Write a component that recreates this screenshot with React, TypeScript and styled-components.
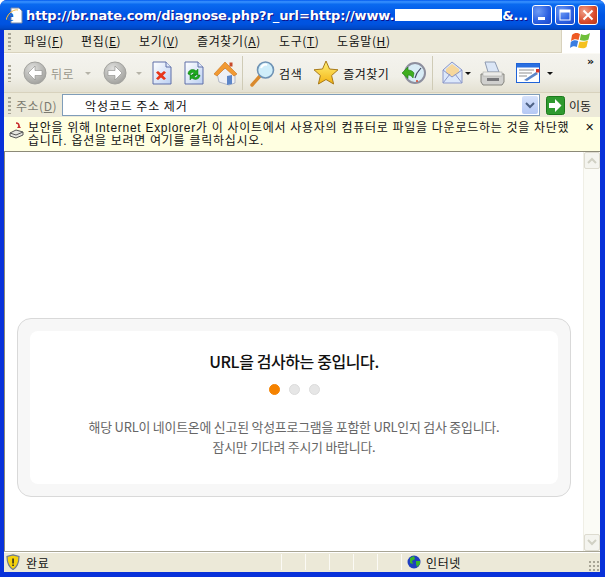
import React from "react";
import styled, { createGlobalStyle } from "styled-components";

const uiFont = `"Noto Sans CJK KR", "Noto Sans", sans-serif`;

const GlobalStyle = createGlobalStyle`
  html, body { margin: 0; padding: 0; background: #fff; }
  body { font-family: ${uiFont}; }
  * { box-sizing: border-box; }
`;

const Win = styled.div`
  width: 605px;
  height: 577px;
  display: flex;
  flex-direction: column;
  overflow: hidden;
  background: #0831d9;
  border-radius: 7px 7px 0 0;
`;

const TitleBar = styled.div`
  height: 30px;
  flex: none;
  display: flex;
  align-items: center;
  padding: 0 7px 0 6px;
  background: linear-gradient(180deg, #0058ee 0%, #3a93ff 6%, #0a6af0 14%, #0055e5 50%, #0053e0 80%, #0049c8 94%, #003dae 100%);
`;

const TitleText = styled.div`
  margin-left: 3px;
  width: 506px;
  flex: none;
  display: flex;
  align-items: center;
  font: bold 13px "DejaVu Sans", "Liberation Sans", sans-serif;
  letter-spacing: -0.12px;
  color: #fff;
  white-space: nowrap;
  overflow: hidden;
  text-shadow: 1px 1px 0 #0f1089;
`;

const Redacted = styled.span`
  display: inline-block;
  width: 107px;
  height: 12px;
  margin: 0 0 0 1px;
  background: #fff;
`;

const WinBtns = styled.div`
  display: flex;
  gap: 3px;
`;

const WinBtn = styled.div<{ $close?: boolean }>`
  width: 20px;
  height: 20px;
  border: 1px solid #fff;
  border-radius: 3px;
  background: ${(p) =>
    p.$close
      ? "radial-gradient(circle at 30% 30%, #f0a08a, #d8492a 60%, #b83a18)"
      : "radial-gradient(circle at 30% 30%, #6f9cf5, #2a5ee0 60%, #1c47c8)"};
  display: flex;
  align-items: center;
  justify-content: center;
`;

const Body = styled.div`
  flex: 1;
  min-height: 0;
  margin: 0 5px 5px 4px;
  display: flex;
  flex-direction: column;
  background: #ece9d8;
`;

const MenuBar = styled.div`
  height: 23px;
  flex: none;
  display: flex;
  align-items: center;
  padding-left: 4px;
  background: #ece9d8;
  border-bottom: 1px solid #d8d2bd;
`;

const Grip = styled.div`
  width: 3px;
  height: 17px;
  flex: none;
  background: repeating-linear-gradient(180deg, #a8a595 0 2px, transparent 2px 4px);
`;

const MenuItems = styled.div`
  display: flex;
  flex: 1;
  margin-left: 13px;
`;

const MenuItem = styled.span<{ $w: number }>`
  width: ${(p) => p.$w}px;
  font-size: 12px;
  line-height: 16px;
  letter-spacing: 0.6px;
  color: #111;
  white-space: nowrap;
  u { text-underline-offset: 1px; }
`;

const LogoBox = styled.div`
  width: 39px;
  height: 23px;
  background: #fff;
  border-left: 1px solid #d8d2bd;
  display: flex;
  align-items: center;
  justify-content: center;
`;

const ToolBar = styled.div`
  height: 40px;
  flex: none;
  display: flex;
  align-items: center;
  padding-left: 4px;
  position: relative;
  background: linear-gradient(180deg, #f4f3ee 0%, #f0efe7 60%, #e4e1d2 100%);
  border-top: 1px solid #fbfaf5;
  border-bottom: 1px solid #d8d2bd;
`;

const Tool = styled.div<{ $ml?: number }>`
  display: flex;
  align-items: center;
  margin-left: ${(p) => p.$ml ?? 0}px;
`;

const ToolLabel = styled.span<{ $off?: boolean; $ml?: number }>`
  font-size: 12px;
  letter-spacing: 0.5px;
  margin-left: ${(p) => p.$ml ?? 4}px;
  color: ${(p) => (p.$off ? "#99978c" : "#111")};
  white-space: nowrap;
`;

const Caret = styled.span<{ $off?: boolean; $ml?: number }>`
  width: 0;
  height: 0;
  margin-left: ${(p) => p.$ml ?? 5}px;
  border-left: 3px solid transparent;
  border-right: 3px solid transparent;
  border-top: 3px solid ${(p) => (p.$off ? "#b5b3a8" : "#111")};
`;

const Sep = styled.div<{ $ml: number }>`
  width: 1px;
  height: 34px;
  margin-left: ${(p) => p.$ml}px;
  background: #cfcbb6;
`;

const More = styled.span`
  position: absolute;
  right: 6px;
  top: 1px;
  font: bold 11px "DejaVu Sans", sans-serif;
  color: #111;
`;

const AddressBar = styled.div`
  height: 24px;
  flex: none;
  display: flex;
  align-items: center;
  padding-left: 4px;
  background: #ece9d8;
`;

const AddressLabel = styled.span`
  font-size: 12px;
  letter-spacing: 0.5px;
  color: #7b7a70;
  margin-left: 5px;
  width: 46px;
  flex: none;
  white-space: nowrap;
`;

const AddressInput = styled.div`
  width: 478px;
  height: 22px;
  flex: none;
  border: 1px solid #7f9db9;
  background: #fff;
  display: flex;
  align-items: center;
  justify-content: space-between;
  padding: 1px 1px 1px 22px;
  font-size: 12px;
  letter-spacing: 0.9px;
  color: #111;
`;

const DropBtn = styled.div`
  width: 16px;
  height: 18px;
  border-radius: 2px;
  background: linear-gradient(180deg, #d6e2fb, #b4c8f4);
  display: flex;
  align-items: center;
  justify-content: center;
`;

const GoBtn = styled.div`
  display: flex;
  align-items: center;
  margin-left: 6px;
  font-size: 12px;
  color: #222;
  gap: 4px;
`;

const InfoBar = styled.div`
  height: 35px;
  flex: none;
  display: flex;
  padding: 5px 0 0 5px;
  background: #ffffe1;
  border-bottom: 1px solid #8c8a78;
  font-family: "Liberation Sans", "Noto Sans CJK KR", sans-serif;
  font-size: 12px;
  line-height: 13px;
  letter-spacing: 0.72px;
  color: #111;
`;

const InfoText = styled.div`
  width: 549px;
  margin-left: 4px;
  flex: none;
  white-space: nowrap;
`;

const InfoClose = styled.div`
  margin: -1px 0 0 8px;
  font: bold 11px "DejaVu Sans", sans-serif;
  line-height: 14px;
`;

const Viewport = styled.div`
  flex: 1;
  min-height: 0;
  display: flex;
  background: #fff;
  border-left: 1px solid #8c8a78;
`;

const Page = styled.div`
  flex: 1;
  padding: 166px 12px 0 12px;
`;

const Card = styled.div`
  width: 554px;
  height: 179px;
  padding: 12px;
  background: #f7f7f7;
  border: 1px solid #d9d9d9;
  border-radius: 14px;
`;

const CardInner = styled.div`
  height: 100%;
  background: #fff;
  border-radius: 8px;
  display: flex;
  flex-direction: column;
  align-items: center;
  padding-top: 19px;
`;

const Heading = styled.div`
  font: 500 16px/22px "Noto Sans CJK KR", sans-serif;
  letter-spacing: -0.4px;
  color: #111;
`;

const Dots = styled.div`
  display: flex;
  gap: 9px;
  margin-top: 12px;
`;

const Dot = styled.span<{ $on?: boolean }>`
  width: 11px;
  height: 11px;
  border-radius: 50%;
  background: ${(p) => (p.$on ? "#f58200" : "#e6e6e6")};
  border: 1px solid ${(p) => (p.$on ? "#f58200" : "#dcdcdc")};
`;

const Message = styled.div`
  margin-top: 22px;
  font-size: 12.9px;
  line-height: 20px;
  letter-spacing: -0.2px;
  color: #666;
  text-align: center;
`;

const ScrollBar = styled.div`
  width: 17px;
  flex: none;
  display: flex;
  flex-direction: column;
  justify-content: space-between;
  background: #fbfbf6;
  border-left: 1px solid #f0efe6;
`;

const ScrollBtn = styled.div`
  width: 16px;
  height: 17px;
  background: #f4f4ef;
  border: 1px solid #dddbd0;
  border-radius: 2px;
  display: flex;
  align-items: center;
  justify-content: center;
`;

const StatusBar = styled.div`
  height: 21px;
  flex: none;
  display: flex;
  align-items: center;
  position: relative;
  background: #ece9d8;
  border-top: 1px solid #a8a595;
  box-shadow: inset 0 1px 0 #fff;
  font-size: 12px;
  letter-spacing: 0.6px;
  color: #111;
`;

const StatusMain = styled.div`
  width: 277px;
  flex: none;
  display: flex;
  align-items: center;
  padding-left: 2px;
  gap: 6px;
  height: 100%;
`;

const StatusCell = styled.div<{ $w: number }>`
  width: ${(p) => p.$w}px;
  height: 16px;
  flex: none;
  border-left: 1px solid #fbfaf5;
`;

const StatusZone = styled.div`
  display: flex;
  align-items: center;
  gap: 5px;
  padding-left: 5px;
  height: 16px;
  border-left: 1px solid #fbfaf5;
`;

const Resize = styled.div`
  position: absolute;
  right: 0;
  bottom: 0;
  width: 12px;
  height: 12px;
  background: radial-gradient(circle, #a8a595 1px, transparent 1.2px) 0 0 / 4px 4px;
`;

const IeIcon = () => (
  <svg width="17" height="17" viewBox="0 0 17 17">
    <path d="M5 1h8l3 3v12H5z" fill="#fff" stroke="#7a8aa8" />
    <text x="0" y="14" fontFamily="Liberation Serif" fontWeight="bold" fontSize="17" fill="#1a5fc8">e</text>
    <path d="M0 13C2 5 9 2 12 3" fill="none" stroke="#f4b942" strokeWidth="1" />
  </svg>
);

const XpLogo = () => (
  <svg width="22" height="20" viewBox="0 0 22 20">
    <path d="M2 4C5 1 8 2 10 3L8.500 9C6 8 4 8 1 10z" fill="#ee5a24" />
    <path d="M11 3C14 5 17 4 20 2L18.500 8.500C16 10 13 10 9.800 9z" fill="#6fbf3a" />
    <path d="M0.800 11C3 9 6 9 8.200 10L6.800 16C4.500 15 2.500 15 0 17z" fill="#3b7de0" />
    <path d="M9.500 10.500C12 11 15 11 18 9.500L16.500 16C14 18 11 17 8 16.500z" fill="#f5c11e" />
  </svg>
);

const NavIcon = ({ dir }: { dir: "back" | "fwd" }) => (
  <svg width="24" height="24" viewBox="0 0 24 24">
    <defs>
      <radialGradient id={`nav-${dir}`} cx="40%" cy="30%" r="80%">
        <stop offset="0" stopColor="#e0e0de" />
        <stop offset="1" stopColor="#9a9a96" />
      </radialGradient>
    </defs>
    <circle cx="12" cy="12" r="11" fill={`url(#nav-${dir})`} stroke="#a2a29e" />
    <path
      d={dir === "back" ? "M12 5l-7 7 7 7v-4.500h7v-5h-7z" : "M12 5l7 7-7 7v-4.500H5v-5h7z"}
      fill="#fff"
      stroke="#8a8a86"
      strokeWidth="0.6"
    />
  </svg>
);

const DocIcon = ({ kind }: { kind: "stop" | "refresh" }) => (
  <svg width="20" height="24" viewBox="0 0 20 24">
    <defs>
      <linearGradient id={`doc-${kind}`} x1="0" y1="0" x2="1" y2="1">
        <stop offset="0" stopColor="#fff" />
        <stop offset="1" stopColor="#bcd0f2" />
      </linearGradient>
    </defs>
    <path d="M1 1h13l5 5v17H1z" fill={`url(#doc-${kind})`} stroke="#5f6fa8" />
    <path d="M14 1v5h5" fill="#dfe8f8" stroke="#5f6fa8" />
    {kind === "stop" ? (
      <path d="M6 10l3 2.500L12 10l2 1.500-3 3 3 3-2 1.500-3-2.500L6 19l-2-1.500 3-3-3-3z" fill="#e8351a" />
    ) : (
      <>
        <path d="M4 13c0-4 5-6 8-3l2-2v6H8l2-2c-2-1-3 0-4 2z" fill="#1ea81e" stroke="#0c7a0c" strokeWidth="0.5" />
        <path d="M16 14c0 4-5 6-8 3l-2 2v-5h6l-2 2c2 1 3 0 4-2z" fill="#1ea81e" stroke="#0c7a0c" strokeWidth="0.5" />
      </>
    )}
  </svg>
);

const HomeIcon = () => (
  <svg width="25" height="25" viewBox="0 0 25 25">
    <path d="M4 12l9-5 9 6v9l-6 2-10-3z" fill="#eef0f6" stroke="#8a94ae" strokeWidth="0.6" />
    <path d="M14 15l5-1v9l-5 1z" fill="#5d86c8" />
    <path d="M1 13L12 1l12 12-3 2-9-8-8 8z" fill="#f29a32" stroke="#c8701a" strokeWidth="0.6" />
    <rect x="16.500" y="1.500" width="3" height="4" fill="#c84a2a" />
  </svg>
);

const SearchIcon = () => (
  <svg width="25" height="27" viewBox="0 0 25 27">
    <path d="M2 25l8-9" stroke="#d98a2e" strokeWidth="3.400" strokeLinecap="round" />
    <circle cx="15.500" cy="10" r="8" fill="#cfeefa" stroke="#6f93b5" strokeWidth="1.600" />
    <path d="M11 8c1-3 4-4 6-3" stroke="#fff" strokeWidth="2" fill="none" />
  </svg>
);

const StarIcon = () => (
  <svg width="26" height="26" viewBox="0 0 26 26">
    <defs>
      <linearGradient id="star" x1="0" y1="0" x2="0" y2="1">
        <stop offset="0" stopColor="#fff27a" />
        <stop offset="1" stopColor="#f4b312" />
      </linearGradient>
    </defs>
    <path d="M13 1l3.500 8 8.500.8-6.400 5.700 2 8.500L13 19.500 5.400 24l2-8.500L1 9.800 9.500 9z" fill="url(#star)" stroke="#a87a1a" />
  </svg>
);

const HistoryIcon = () => (
  <svg width="24" height="26" viewBox="0 0 24 26">
    <circle cx="13" cy="13" r="10" fill="#d8ecf6" stroke="#8d8f9e" strokeWidth="2" />
    <path d="M15 13l4-5M15 13l-2 5" stroke="#444a66" strokeWidth="1.200" />
    <circle cx="15" cy="21" r="1" fill="#d8452a" />
    <path d="M0 13l6-6v3c2 0 5 1 6 3l-1 5c-1-2-3-3-5-3v3.500z" fill="#3fae1f" stroke="#1d7a10" strokeWidth="0.6" />
  </svg>
);

const MailIcon = () => (
  <svg width="21" height="24" viewBox="0 0 21 24">
    <path d="M1 9L10 1l10 8v13H1z" fill="#dce8fb" stroke="#8b97c8" />
    <path d="M4 8l6-5 7 5v4l-7 4-6-4z" fill="#f6d79c" />
    <path d="M1 9l9 7 10-7M1 22l7-9M20 22l-7-9" fill="none" stroke="#8b97c8" />
  </svg>
);

const PrintIcon = () => (
  <svg width="25" height="25" viewBox="0 0 25 25">
    <path d="M5 1h10l4 10H8z" fill="#dbe6f6" stroke="#8e9ab0" />
    <path d="M1 13h23v8l-2 3H3l-2-3z" fill="#d0d0ce" stroke="#85857f" />
    <rect x="3" y="11" width="19" height="4" fill="#ececea" stroke="#a0a09a" strokeWidth="0.5" />
    <rect x="7" y="17" width="12" height="3" fill="#77777a" />
  </svg>
);

const EditIcon = () => (
  <svg width="24" height="20" viewBox="0 0 24 20">
    <rect x="0.500" y="0.500" width="23" height="19" fill="#fff" stroke="#1f63d8" />
    <rect x="1" y="1" width="22" height="3.500" fill="#2a6fe0" />
    <path d="M3 7h15M3 10h13M3 13h8" stroke="#8f8f8f" />
    <path d="M8 17l12-8 2 2-11 7z" fill="#5d86c8" />
    <rect x="20" y="6" width="3.500" height="3.500" fill="#d83a2a" />
  </svg>
);

const GoIcon = () => (
  <svg width="19" height="19" viewBox="0 0 19 19">
    <rect x="0.500" y="0.500" width="18" height="18" rx="2" fill="#2f9a2f" stroke="#1b7a1b" />
    <path d="M9 3l6.500 6.500L9 16v-4H3V7h6z" fill="#fff" />
  </svg>
);

const Chevron = ({ dir, color }: { dir: "up" | "down"; color: string }) => (
  <svg width="10" height="7" viewBox="0 0 10 7">
    <path d={dir === "down" ? "M1 1l4 4 4-4" : "M1 6l4-4 4 4"} fill="none" stroke={color} strokeWidth="2" />
  </svg>
);

const InfoIcon = () => (
  <svg width="15" height="17" viewBox="0 0 15 17">
    <path d="M7 1c2 0 3 1 3 3" fill="none" stroke="#c82a2a" strokeWidth="1.400" />
    <path d="M8 6l2-3 2 3z" fill="#c82a2a" />
    <path d="M1 11l6-3 7 2v3l-7 3-6-2z" fill="#e6e6e0" stroke="#555" />
    <path d="M1 11l6 2 7-3" fill="none" stroke="#555" />
  </svg>
);

const ShieldIcon = () => (
  <svg width="14" height="16" viewBox="0 0 14 16">
    <path d="M7 .800L13 2.500c0 6-1 10-6 13-5-3-6-7-6-13z" fill="#f5d20c" stroke="#6e7a92" strokeWidth="1.200" />
    <rect x="6.300" y="4.500" width="1.500" height="5" fill="#222" />
    <rect x="6.300" y="10.500" width="1.500" height="1.500" fill="#222" />
  </svg>
);

const GlobeIcon = () => (
  <svg width="14" height="14" viewBox="0 0 14 14">
    <circle cx="7" cy="7" r="6.500" fill="#1f3fc0" />
    <path d="M3 3l4-2 1 3-3 2 1 3-3-1zM9 6l4 0 0 3-3 3-1-3z" fill="#39b52a" />
  </svg>
);

const Menu = ({ label, keyChar, w }: { label: string; keyChar: string; w: number }) => (
  <MenuItem $w={w}>
    {label}(<u>{keyChar}</u>)
  </MenuItem>
);

export default function App() {
  return (
    <Win>
      <GlobalStyle />
      <TitleBar>
        <IeIcon />
        <TitleText>
          http://br.nate.com/diagnose.php?r_url=http://www.<Redacted />&amp;...
        </TitleText>
        <WinBtns>
          <WinBtn>
            <svg width="10" height="10" viewBox="0 0 10 10"><rect x="1" y="7" width="7" height="3" fill="#fff" /></svg>
          </WinBtn>
          <WinBtn>
            <svg width="12" height="12" viewBox="0 0 12 12"><rect x="1" y="1" width="10" height="10" fill="none" stroke="#fff" /><rect x="1" y="1" width="10" height="2.500" fill="#fff" /></svg>
          </WinBtn>
          <WinBtn $close>
            <svg width="12" height="12" viewBox="0 0 12 12"><path d="M1.500 1.500l9 9M10.500 1.500l-9 9" stroke="#fff" strokeWidth="2" /></svg>
          </WinBtn>
        </WinBtns>
      </TitleBar>
      <Body>
        <MenuBar>
          <Grip />
          <MenuItems>
            <Menu label="파일" keyChar="F" w={57} />
            <Menu label="편집" keyChar="E" w={58} />
            <Menu label="보기" keyChar="V" w={58} />
            <Menu label="즐겨찾기" keyChar="A" w={82} />
            <Menu label="도구" keyChar="T" w={58} />
            <Menu label="도움말" keyChar="H" w={70} />
          </MenuItems>
          <LogoBox><XpLogo /></LogoBox>
        </MenuBar>
        <ToolBar>
          <Grip />
          <Tool $ml={12}>
            <NavIcon dir="back" />
            <ToolLabel $off>뒤로</ToolLabel>
            <Caret $off $ml={11} />
          </Tool>
          <Tool $ml={12}>
            <NavIcon dir="fwd" />
            <Caret $off $ml={9} />
          </Tool>
          <Tool $ml={10}><DocIcon kind="stop" /></Tool>
          <Tool $ml={12}><DocIcon kind="refresh" /></Tool>
          <Tool $ml={9}><HomeIcon /></Tool>
          <Sep $ml={4} />
          <Tool $ml={7}>
            <SearchIcon />
            <ToolLabel>검색</ToolLabel>
          </Tool>
          <Tool $ml={11}>
            <StarIcon />
            <ToolLabel>즐겨찾기</ToolLabel>
          </Tool>
          <Tool $ml={13}><HistoryIcon /></Tool>
          <Sep $ml={6} />
          <Tool $ml={9}>
            <MailIcon />
            <Caret $ml={2} />
          </Tool>
          <Tool $ml={9}><PrintIcon /></Tool>
          <Tool $ml={11}>
            <EditIcon />
            <Caret $ml={7} />
          </Tool>
          <More>»</More>
        </ToolBar>
        <AddressBar>
          <Grip />
          <AddressLabel>주소(<u>D</u>)</AddressLabel>
          <AddressInput>
            악성코드 주소 제거
            <DropBtn><Chevron dir="down" color="#4d6185" /></DropBtn>
          </AddressInput>
          <GoBtn><GoIcon />이동</GoBtn>
        </AddressBar>
        <InfoBar>
          <InfoIcon />
          <InfoText>
            보안을 위해 Internet Explorer가 이 사이트에서 사용자의 컴퓨터로 파일을 다운로드하는 것을 차단했
            <br />
            습니다. 옵션을 보려면 여기를 클릭하십시오.
          </InfoText>
          <InfoClose>✕</InfoClose>
        </InfoBar>
        <Viewport>
          <Page>
            <Card>
              <CardInner>
                <Heading>URL을 검사하는 중입니다.</Heading>
                <Dots>
                  <Dot $on />
                  <Dot />
                  <Dot />
                </Dots>
                <Message>
                  해당 URL이 네이트온에 신고된 악성프로그램을 포함한 URL인지 검사 중입니다.
                  <br />
                  잠시만 기다려 주시기 바랍니다.
                </Message>
              </CardInner>
            </Card>
          </Page>
          <ScrollBar>
            <ScrollBtn><Chevron dir="up" color="#d0d0c4" /></ScrollBtn>
            <ScrollBtn><Chevron dir="down" color="#d0d0c4" /></ScrollBtn>
          </ScrollBar>
        </Viewport>
        <StatusBar>
          <StatusMain>
            <ShieldIcon />
            완료
          </StatusMain>
          <StatusCell $w={24} />
          <StatusCell $w={24} />
          <StatusCell $w={24} />
          <StatusCell $w={24} />
          <StatusCell $w={24} />
          <StatusZone>
            <GlobeIcon />
            인터넷
          </StatusZone>
          <Resize />
        </StatusBar>
      </Body>
    </Win>
  );
}
